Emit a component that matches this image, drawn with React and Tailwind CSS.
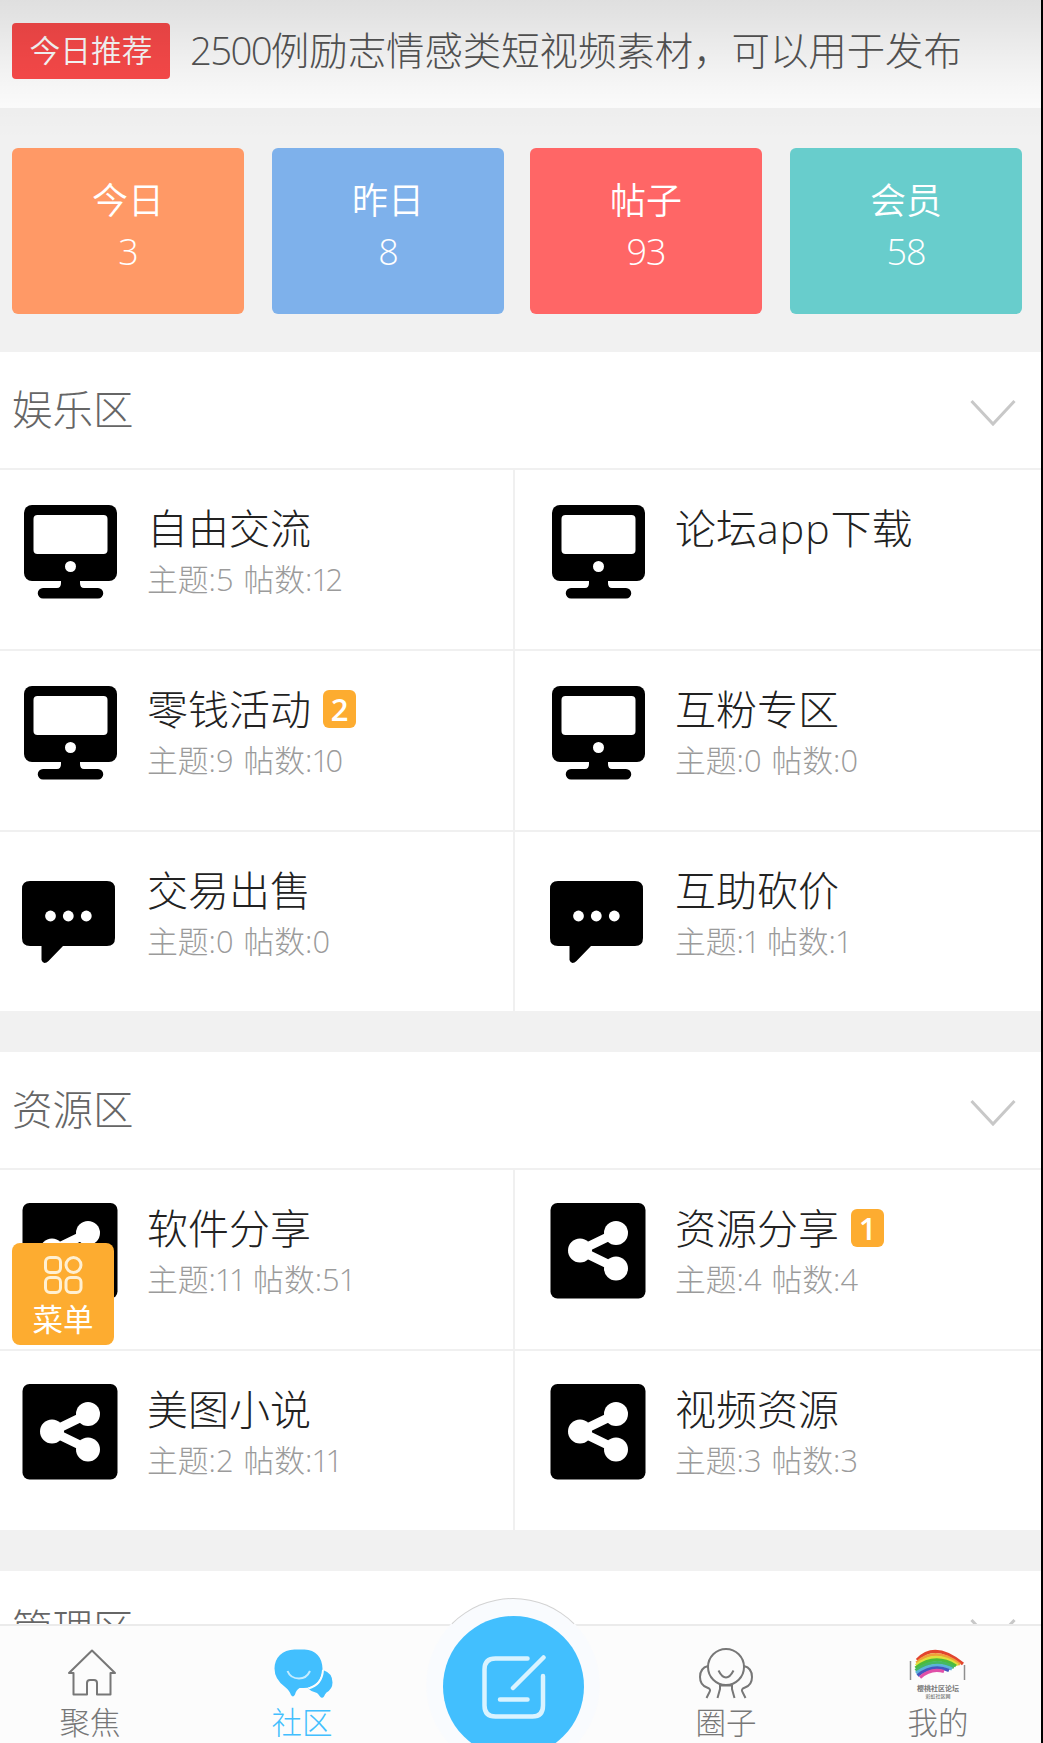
import React from "react";

const stats = [
  { label: "今日", value: "3", cls: "bg-[#ff9966] mr-7" },
  { label: "昨日", value: "8", cls: "bg-[#7eb1eb] mr-[26px]" },
  { label: "帖子", value: "93", cls: "bg-[#ff6666] mr-7" },
  { label: "会员", value: "58", cls: "bg-[#68cdcc]" },
];

const sections = [
  {
    title: "娱乐区",
    items: [
      { icon: "monitor", name: "自由交流", meta: "主题:5 帖数:12" },
      { icon: "monitor", name: "论坛app下载" },
      { icon: "monitor", name: "零钱活动", meta: "主题:9 帖数:10", badge: "2" },
      { icon: "monitor", name: "互粉专区", meta: "主题:0 帖数:0" },
      { icon: "chat", name: "交易出售", meta: "主题:0 帖数:0" },
      { icon: "chat", name: "互助砍价", meta: "主题:1 帖数:1" },
    ],
  },
  {
    title: "资源区",
    items: [
      { icon: "share", name: "软件分享", meta: "主题:11 帖数:51" },
      { icon: "share", name: "资源分享", meta: "主题:4 帖数:4", badge: "1" },
      { icon: "share", name: "美图小说", meta: "主题:2 帖数:11" },
      { icon: "share", name: "视频资源", meta: "主题:3 帖数:3" },
    ],
  },
  { title: "管理区", items: [] },
];

function ForumIcon({ type }) {
  if (type === "monitor") {
    return (
      <svg className="mt-px h-[96px] w-[96px]" viewBox="0 0 96 96">
        <rect x="2" y="1" width="93" height="76" rx="8" />
        <rect x="11.5" y="11" width="74" height="39" rx="4" fill="#fff" />
        <circle cx="48.5" cy="62.5" r="5.5" fill="#fff" />
        <path d="M39 76h19v3q0 5 4 5h14a5.200 5.200 0 0 1 0 10.500H21a5.200 5.200 0 0 1 0-10.500h14q4 0 4-5z" />
      </svg>
    );
  }
  if (type === "chat") {
    return (
      <svg className="mt-[2px] h-[96px] w-[96px]" viewBox="0 0 96 96">
        <path d="M8 14h77q8 0 8 8v49q0 8-8 8H41L26.500 94q-2 2-4 2t-3-3V79H8q-8 0-8-8V22q0-8 8-8z" />
        <g fill="#fff">
          <circle cx="28.500" cy="49" r="5.400" />
          <circle cx="46.300" cy="49" r="5.400" />
          <circle cx="64.300" cy="49" r="5.400" />
        </g>
      </svg>
    );
  }
  return (
    <svg className="h-[96px] w-[96px]" viewBox="0 0 96 96">
      <rect x="0.500" y="0" width="95" height="95.500" rx="7" />
      <path d="M66 30L30 47.500L66 65" fill="none" stroke="#fff" strokeWidth="9" />
      <g fill="#fff">
        <circle cx="66" cy="30" r="12" />
        <circle cx="30" cy="47.500" r="12" />
        <circle cx="66" cy="65.500" r="12" />
      </g>
    </svg>
  );
}

function Meta({ text }) {
  return (
    <div className="text-[30.800px] leading-[50px] [word-spacing:2px] whitespace-nowrap text-[#9b9b9b]">
      {text.split(/(1+)/).map((part, i) =>
        part.startsWith("1") ? (
          <span key={i} className="-ml-px tracking-[-3.500px]">
            {part}
          </span>
        ) : (
          part
        )
      )}
    </div>
  );
}

function Board({ item, right }) {
  return (
    <div
      className={
        right
          ? "flex h-[181px] flex-1 border-t-2 border-[#f0f0f0] pl-[35px]"
          : "flex h-[181px] w-[515px] border-t-2 border-r-2 border-[#f0f0f0] pl-[22px]"
      }
    >
      <div className="mt-[33px] w-[96px] shrink-0">
        <ForumIcon type={item.icon} />
      </div>
      <div className="ml-[29px] pt-[32px]">
        <div className="flex items-center">
          <span className="text-[41px] leading-[52px] whitespace-nowrap text-[#222]">
            {item.name.split(/([a-z]+)/).map((part, i) =>
              i % 2 ? (
                <span key={i} className="tracking-[1px]">
                  {part}
                </span>
              ) : (
                part
              )
            )}
          </span>
          {item.badge && (
            <span className="ml-[12px] flex h-[38px] w-[33px] items-center justify-center rounded-md bg-[#fdac30] font-['Open_Sans'] text-[31px] font-semibold text-white">
              {item.badge}
            </span>
          )}
        </div>
        {item.meta && <Meta text={item.meta} />}
      </div>
    </div>
  );
}

function Section({ section }) {
  return (
    <section className="mb-[41px] shrink-0 bg-white">
      <div className="flex h-[116px] items-center justify-between pr-[25px] pl-3">
        <h2 className="-mt-px text-[40.500px] leading-[52px] text-[#666]">{section.title}</h2>
        <svg className="mt-[6px] h-[28px] w-[46px]" viewBox="0 0 46 28" fill="none" stroke="#c8c8c8" strokeWidth="3">
          <path d="M1.500 2L23 25L44.500 2" />
        </svg>
      </div>
      <div className="flex flex-wrap">
        {section.items.map((it, i) => (
          <Board key={it.name} item={it} right={i % 2 === 1} />
        ))}
      </div>
    </section>
  );
}

function HomeIcon() {
  return (
    <svg className="h-[54px] w-[60px]" viewBox="0 0 60 54" fill="none" stroke="#777" strokeWidth="2" strokeLinejoin="round">
      <path d="M32 4.500L55 27h-4.500v21.500H37V37q0-3-3-3h-4q-3 0-3 3v11.500H13.500V27H9z" />
    </svg>
  );
}

function ChatIcon() {
  return (
    <svg className="h-[54px] w-[60px] overflow-visible" viewBox="-2.500 0 60 54">
      <path
        d="M48.500 24Q58 27 58 36.500Q58 43 52 46.500Q50.500 48 49.500 50.500Q47.500 53 45.500 50.500Q44 48 42.500 47Q37 46 33.500 42.500Q48 40 48.500 24z"
        fill="#42bffe"
      />
      <path
        d="M20 3.500H30C41 3.500 48 12 48 22.500C48 34 40 42 29 42H25Q21.500 44 20.500 48.500Q18.500 52 16.500 49Q15 44.500 10 40.500Q0 33 0 22.500C0 12 8 3.500 20 3.500z"
        fill="#42bffe"
      />
      <path d="M48.500 24Q47.500 39 34 42.500" fill="none" stroke="#fcfcfc" strokeWidth="2" />
      <path d="M13 25Q16 32.500 24.500 32.500Q32 32.500 35.500 25" fill="none" stroke="#c5ecff" strokeWidth="2" />
    </svg>
  );
}

function CircleIcon() {
  return (
    <svg className="h-[54px] w-[60px]" viewBox="0 0 60 54" fill="none" stroke="#777" strokeWidth="2">
      <circle cx="30" cy="21" r="18" />
      <path d="M22.500 24.500Q26 31.500 30 31.500Q34 31.500 37.500 24.500" />
      <path d="M12 20Q4 22 4 31Q4 39 11 41.500Q15.500 43 13.500 46L10.500 52" />
      <path d="M48 20Q56 22 56 31Q56 39 49 41.500Q44.500 43 46.500 46L49.500 52" />
      <path d="M23 39.500H37M24 39.500V43L21.500 52M36 39.500V43L38.500 52" />
    </svg>
  );
}

function RainbowIcon() {
  const bands = [
    ["#e2452f", "M9 14Q27-5 55 18"],
    ["#f0a03a", "M8.500 17Q27-.5 52 18.500"],
    ["#dfe03c", "M8 19.500Q27 3.500 50 19"],
    ["#4dbb3a", "M7.500 22Q27 7 48 20"],
    ["#45b862", "M7.500 24.500Q27 10.500 46 21.500"],
    ["#5bb3d8", "M8 27Q26 14 44 23"],
    ["#4457c0", "M9.500 29.500Q25 17.500 41 24.500"],
    ["#e050a8", "M12 31.500Q23 21.500 36 25.500"],
  ];
  return (
    <div className="flex h-[54px] w-[60px] flex-col items-center">
      <svg className="h-[38px] w-[60px]" viewBox="0 0 60 38" fill="none">
        {bands.map(([color, d]) => (
          <path key={color} d={d} stroke={color} strokeWidth="3.200" />
        ))}
        <path d="M2.500 15v19M56.500 19v15" stroke="#8f8f8f" strokeWidth="1.500" />
      </svg>
      <span className="text-[7px] leading-[9px] font-bold whitespace-nowrap text-[#777]">樱桃社区论坛</span>
      <span className="text-[5px] leading-[6px] font-bold whitespace-nowrap text-[#888]">彩虹社区网</span>
    </div>
  );
}

function Tab({ icon, label, active }) {
  return (
    <div className="flex w-[212px] flex-col items-center pt-[20px]">
      {icon}
      <span
        className={
          active
            ? "mt-[2px] text-[30.500px] leading-[40px] text-[#42bffe]"
            : "mt-[2px] text-[30.500px] leading-[40px] text-[#777]"
        }
      >
        {label}
      </span>
    </div>
  );
}

export default function App() {
  return (
    <div className="relative flex h-[1743px] w-[1043px] flex-col overflow-hidden border-r-2 border-black bg-[#f1f1f1] font-['Open_Sans','Noto_Sans_CJK_SC',sans-serif] font-light">
      <main className="flex min-h-0 flex-1 flex-col overflow-hidden">
        <header className="flex h-[108px] shrink-0 items-start bg-[#fefefe] pl-3">
          <span className="mt-[23px] flex h-[56px] w-[158px] items-center justify-center rounded bg-[#fc4a4a] pb-[2px] text-[30.700px] font-[350] text-white">
            今日推荐
          </span>
          <span className="mt-[22px] ml-[20px] text-[38.400px] leading-[56px] whitespace-nowrap text-[#555]">
            <span className="tracking-[-1.700px]">2500</span>例励志情感类短视频素材，可以用于发布
          </span>
        </header>
        <div className="flex shrink-0 px-3 pt-[40px] pb-[38px]">
          {stats.map((s) => (
            <div
              key={s.label}
              className={`flex h-[166px] w-[232px] flex-col items-center rounded-md pt-[27px] text-[36px] leading-[52px] font-[350] text-white ${s.cls}`}
            >
              <span>{s.label}</span>
              <span className="-mt-px tracking-[-1px]">{s.value}</span>
            </div>
          ))}
        </div>
        {sections.map((s) => (
          <Section key={s.title} section={s} />
        ))}
      </main>

      <div className="pointer-events-none absolute inset-x-0 top-0 h-[140px] bg-[linear-gradient(to_bottom,rgba(0,0,0,0.12)_0%,rgba(0,0,0,0.11)_9%,rgba(0,0,0,0.055)_45%,rgba(0,0,0,0.015)_75%,rgba(0,0,0,0)_100%)]" />

      <button className="absolute top-[1243px] left-3 flex h-[102px] w-[102px] flex-col items-center rounded-lg bg-[#fdac30] pt-[12px] text-[30.500px] leading-[48px] font-normal text-white">
        <svg className="h-[40px] w-[40px] shrink-0" viewBox="0 0 40 40" fill="none" stroke="#fff0d2" strokeWidth="3">
          <rect x="2.500" y="2.500" width="15" height="15" rx="4.500" />
          <circle cx="30.500" cy="10" r="7.500" />
          <rect x="2.500" y="22.500" width="15" height="15" rx="4.500" />
          <rect x="23" y="22.500" width="15" height="15" rx="4.500" />
        </svg>
        <span>菜单</span>
      </button>

      <nav className="relative h-[119px] shrink-0 border-t-2 border-[#ebebeb] bg-[#fcfcfc]">
        <div className="absolute -top-[28px] left-[426px] h-[174px] w-[174px] rounded-full border border-[#fafbfd] border-t-[#d2d2d2] bg-[#f9fbfe]" />
        <div className="relative -ml-4 flex h-[117px] w-[1060px]">
          <Tab icon={<HomeIcon />} label="聚焦" />
          <Tab icon={<ChatIcon />} label="社区" active />
          <div className="flex w-[212px] justify-center pr-px">
            <div className="-mt-[10px] flex h-[141px] w-[141px] shrink-0 items-center justify-center rounded-full bg-[#42bffe]">
              <svg className="h-[66px] w-[66px]" viewBox="0 0 66 66" fill="none" stroke="#d9f3ff" strokeWidth="4.500" strokeLinecap="round">
                <path d="M46.500 4.500H14.500Q3.500 4.500 3.500 15.500V51.500Q3.500 62.500 14.500 62.500H51.500Q62 62.500 62 51.500V22" />
                <path d="M32 34L62.500 3.500M19 45.500H46.500" />
              </svg>
            </div>
          </div>
          <Tab icon={<CircleIcon />} label="圈子" />
          <Tab icon={<RainbowIcon />} label="我的" />
        </div>
      </nav>
    </div>
  );
}
